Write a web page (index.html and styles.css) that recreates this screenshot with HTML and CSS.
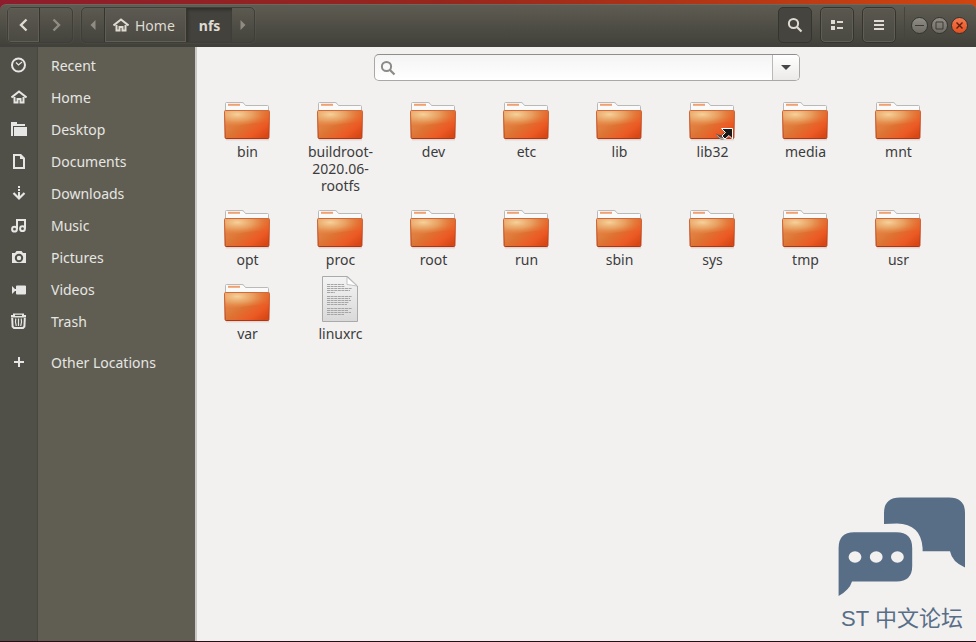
FILE: index.html
```
<!DOCTYPE html>
<html lang="en">
<head>
<meta charset="utf-8">
<title>nfs</title>
<link rel="stylesheet" href="styles.css">
</head>
<body>
<svg class="defs" width="0" height="0" aria-hidden="true">
  <defs>
    <linearGradient id="body" x1="0" y1="0" x2="1" y2=".8">
      <stop offset="0" stop-color="#e59a5e"/><stop offset=".5" stop-color="#dd7434"/><stop offset=".8" stop-color="#ec5a24"/><stop offset="1" stop-color="#d84816"/>
    </linearGradient>
    <radialGradient id="shine" cx=".28" cy=".2" r=".75">
      <stop offset="0" stop-color="#f6d29b"/><stop offset=".5" stop-color="#eba96a" stop-opacity=".75"/><stop offset="1" stop-color="#e8702f" stop-opacity=".2"/>
    </radialGradient>
    <linearGradient id="edge" x1="0" y1="0" x2="0" y2="1">
      <stop offset="0" stop-color="#cf6a3c"/><stop offset="1" stop-color="#b5320c"/>
    </linearGradient>
    <linearGradient id="paper" x1="0" y1="0" x2="0" y2="1">
      <stop offset="0" stop-color="#f4f4f4"/><stop offset="1" stop-color="#d9d9d9"/>
    </linearGradient>
    <symbol id="folder" viewBox="1 0 48 48">
      <path d="M3 46.800h43" stroke="#000" stroke-opacity=".15"/>
      <path d="M2.500 20V10.500q0-1 1-1h15.500q1 0 2 1l1.500 2h22q1 0 1 1V20z" fill="#fafafa" stroke="#b9bab8"/>
      <path d="M5 11.800h12" stroke="#f0a070" stroke-width="2"/>
      <path d="M1.500 18.500q0-1 1-1h43q1 0 1 1l-.6 26q0 1-1 1H3.100q-1 0-1-1z" fill="url(#body)"/>
      <path d="M2 18h44l-.3 11Q26 30 2.300 35z" fill="url(#shine)"/>
      <path d="M1.500 18.500q0-1 1-1h43q1 0 1 1l-.6 26q0 1-1 1H3.100q-1 0-1-1z" fill="none" stroke="url(#edge)"/>
    </symbol>
    <symbol id="file" viewBox="1 0 48 48">
      <path d="M6.500 1.500h25l10 9.500v35.500h-35z" fill="url(#paper)" stroke="#aaa"/>
      <path d="M31 2v7.500q4 .5 10 1.500z" fill="#fff" stroke="#b5b5b5" stroke-width=".8"/>
      <g stroke="#a5a5a5"><path d="M11 9.500h17M11 11.500h18M11 13.500h25M11 15.500h23M11 17.500h8M11 21.500h25M11 23.500h23M11 25.500h24M11 27.500h22M11 29.500h20M11 33.500h25M11 35.500h21M11 37.500h24M11 39.500h17" stroke-dasharray="3 .6"/></g>
    </symbol>
    <symbol id="home" viewBox="0 0 16 16">
      <path d="M.5 8.500 8 2.500l7.500 6M3.500 8v5.500h3V10h3v3.500h3V8" fill="none" stroke="currentColor" stroke-width="2"/>
    </symbol>
    <symbol id="search" viewBox="0 0 16 16">
      <path d="M10 10l4.500 4.500" stroke="currentColor" stroke-width="2.200"/><circle cx="6.500" cy="6.500" r="4.600" fill="none" stroke="currentColor" stroke-width="2"/>
    </symbol>
  </defs>
</svg>
<div class="window">
  <header class="bar">
    <nav class="group" aria-label="History">
      <button class="step step-back" aria-label="Back"><svg width="16" height="16" viewBox="0 0 16 16"><path d="M10.500 2.500 5 8l5.500 5.500" fill="none" stroke="currentColor" stroke-width="2.400"/></svg></button>
      <button class="step step-next" aria-label="Forward"><svg width="16" height="16" viewBox="0 0 16 16"><path d="M5.500 2.500 11 8l-5.500 5.500" fill="none" stroke="currentColor" stroke-width="2.400"/></svg></button>
    </nav>
    <nav class="group path" aria-label="Path">
      <button class="arrow" aria-label="Scroll left"><svg width="6" height="10" viewBox="0 0 6 10"><path d="M5.500 0v10L.5 5z" fill="currentColor"/></svg></button>
      <button class="crumb"><svg width="16" height="16"><use href="#home"/></svg>Home</button>
      <button class="crumb crumb-on">nfs</button>
      <button class="arrow" aria-label="Scroll right"><svg width="6" height="10" viewBox="0 0 6 10"><path d="M.5 0v10l5-5z" fill="currentColor"/></svg></button>
    </nav>
    <div class="tools">
      <button class="tool tool-on" aria-label="Search"><svg width="16" height="16"><use href="#search"/></svg></button>
      <button class="tool" aria-label="List view"><svg width="14" height="12" viewBox="0 0 14 12"><path d="M1 1h4v4H1zM1 7h4v4H1zM7 2h6v2H7zM7 8h6v2H7z" fill="currentColor"/></svg></button>
      <button class="tool" aria-label="Menu"><svg width="10" height="12" viewBox="0 0 10 12"><path d="M0 1h10v2H0zM0 5h10v2H0zM0 9h10v2H0z" fill="currentColor"/></svg></button>
    </div>
    <div class="controls">
      <button class="dot" aria-label="Minimize"><svg width="9" height="9" viewBox="0 0 9 9"><path d="M0 4.500h9" stroke="currentColor"/></svg></button>
      <button class="dot" aria-label="Maximize"><svg width="9" height="9" viewBox="0 0 9 9"><path d="M1 1h7v7H1z" fill="none" stroke="currentColor"/></svg></button>
      <button class="dot dot-close" aria-label="Close"><svg width="9" height="9" viewBox="0 0 9 9"><path d="M1.500 1.500l6 6M7.500 1.500l-6 6" stroke="currentColor" stroke-width="1.400"/></svg></button>
    </div>
  </header>
  <div class="main">
    <nav class="side" aria-label="Places">
      <a href="#"><svg width="16" height="16" viewBox="0 0 16 16"><circle cx="7.500" cy="8" r="6.500" fill="none" stroke="currentColor" stroke-width="2"/><path d="M5 5.500l2.500 2.500L11 5" fill="none" stroke="currentColor" stroke-width="1.200"/></svg>Recent</a>
      <a href="#"><svg width="16" height="16"><use href="#home"/></svg>Home</a>
      <a href="#"><svg width="16" height="16" viewBox="0 0 16 16"><path d="M0 1h6v2h8v2H2v10H0zM3 6h13v9H3z" fill="currentColor"/></svg>Desktop</a>
      <a href="#"><svg width="16" height="16" viewBox="0 0 16 16"><path d="M3 2h6l4 4v9H3z" fill="none" stroke="currentColor" stroke-width="2"/><path d="M9 1h1l4 4v1H9z" fill="currentColor"/></svg>Documents</a>
      <a href="#"><svg width="16" height="16" viewBox="0 0 16 16"><path d="M7 1h2v2H7zM7 4h2v2H7zM7 7h2v5H7z" fill="currentColor"/><path d="M2.500 8 8 13.500 13.500 8" fill="none" stroke="currentColor" stroke-width="2.200"/></svg>Downloads</a>
      <a href="#"><svg width="16" height="16" viewBox="0 0 16 16"><path d="M6 12V3h8v8.500" fill="none" stroke="currentColor" stroke-width="2"/><circle cx="3.500" cy="12.200" r="2.400" fill="none" stroke="currentColor" stroke-width="2"/><circle cx="11.500" cy="11.700" r="2.400" fill="none" stroke="currentColor" stroke-width="2"/></svg>Music</a>
      <a href="#"><svg width="16" height="16" viewBox="0 0 16 16"><path d="M1 4h3l1.500-2h5L12 4h3v10H1z" fill="currentColor"/><circle cx="8" cy="9" r="3.200" fill="none" stroke="#505048" stroke-width="2"/></svg>Pictures</a>
      <a href="#"><svg width="16" height="16" viewBox="0 0 16 16"><path d="M1 5l3 3h1V5.500q0-1 1-1h8q1 0 1 1v7q0 1-1 1H6q-1 0-1-1V10H4l-3 3z" fill="currentColor"/></svg>Videos</a>
      <a href="#"><svg width="16" height="16" viewBox="0 0 16 16"><path d="M0 4.500V2h2V.500h11V2h2v2.500zM4 1.800V3h7V1.800z" fill="currentColor" fill-rule="evenodd"/><path d="M1.200 5l.4 8.500L3 15h9l1.400-1.500.4-8.500" fill="none" stroke="currentColor" stroke-width="2"/><path d="M4.800 5.500q-1 4 .5 7.500M7.500 5.500V13M10.200 5.500q1 4-.5 7.500" fill="none" stroke="currentColor" stroke-width="1.200"/></svg>Trash</a>
      <a class="other" href="#"><svg width="16" height="16" viewBox="0 0 16 16"><path d="M3 7h4V3h2v4h4v2H9v4H7V9H3z" fill="currentColor"/></svg>Other Locations</a>
    </nav>
    <main class="view">
      <form class="find">
        <svg width="16" height="16" aria-hidden="true"><use href="#search"/></svg>
        <input type="text" aria-label="Search files">
        <button type="button" aria-label="Search options"><svg width="10" height="5" viewBox="0 0 10 5"><path d="M0 0h10L5 5z" fill="#454545"/></svg></button>
      </form>
      <ul class="files">
        <li><svg class="pic"><use href="#folder"/></svg>bin</li>
        <li><svg class="pic"><use href="#folder"/></svg>buildroot-2020.06-rootfs</li>
        <li><svg class="pic"><use href="#folder"/></svg>dev</li>
        <li><svg class="pic"><use href="#folder"/></svg>etc</li>
        <li><svg class="pic"><use href="#folder"/></svg>lib</li>
        <li><svg class="pic" viewBox="0 0 48 48"><use href="#folder"/><path d="M27 40.500q3 2 6 1.500 2-.5 3.500-2l-2.500 0 1.500 6q-3 1-5.500-.5-3-2-3-5z" fill="#5b4a43"/><path d="M27.500 42q3 4.500 8 3.500" fill="none" stroke="#d9c2b5"/><path d="M32.500 35.500h11v10.500l-3.500-3.500-4 3.500-3-3 3.500-3.500z" fill="#191919" stroke="#fff" stroke-width="1"/></svg>lib32</li>
        <li><svg class="pic"><use href="#folder"/></svg>media</li>
        <li><svg class="pic"><use href="#folder"/></svg>mnt</li>
        <li><svg class="pic"><use href="#folder"/></svg>opt</li>
        <li><svg class="pic"><use href="#folder"/></svg>proc</li>
        <li><svg class="pic"><use href="#folder"/></svg>root</li>
        <li><svg class="pic"><use href="#folder"/></svg>run</li>
        <li><svg class="pic"><use href="#folder"/></svg>sbin</li>
        <li><svg class="pic"><use href="#folder"/></svg>sys</li>
        <li><svg class="pic"><use href="#folder"/></svg>tmp</li>
        <li><svg class="pic"><use href="#folder"/></svg>usr</li>
        <li><svg class="pic"><use href="#folder"/></svg>var</li>
        <li><svg class="pic"><use href="#file"/></svg>linuxrc</li>
      </ul>
      <div class="mark">
        <svg width="128" height="100" viewBox="12 12 128 100" fill="currentColor" aria-hidden="true">
          <path d="M58 39V28Q58 12.500 74 12.500h49q16 0 16 15.500v54.500Q126 77 124 66.300H96.600V63Q95 39 71 38.500z"/>
          <path fill-rule="evenodd" d="M12.600 111V63Q12.600 47.300 28 47.300h42.500q15.700 0 15.700 15.700v18q0 15.500-15.700 15.500H26Q23.500 105 12.600 111zM22.600 72a6.400 5.800 0 1 0 12.800 0a6.400 5.800 0 1 0-12.800 0zM43.800 72a6.400 5.800 0 1 0 12.800 0a6.400 5.800 0 1 0-12.800 0zM65 72a6.400 5.800 0 1 0 12.800 0a6.400 5.800 0 1 0-12.800 0z"/>
        </svg>
        <span>ST 中文论坛</span>
      </div>
    </main>
  </div>
</div>
</body>
</html>
```

FILE: styles.css
```
* { box-sizing: border-box; }
body {
  margin: 0;
  font: 14px/17px "Noto Sans", "Open Sans", sans-serif;
  color: #3c3c3c;
  background: linear-gradient(90deg, #8f1c2c, #96261d 45%, #d0450f);
}
.defs { position: absolute; }
svg { flex: none; }
button { font: inherit; color: inherit; padding: 0; border: 0; background: none; display: flex; align-items: center; justify-content: center; }
.window { display: flex; flex-direction: column; min-height: 100vh; padding-top: 4px; border-bottom: 1px solid #2c0a16; }
.bar {
  display: flex;
  align-items: stretch;
  gap: 8px;
  height: 43px;
  padding: 2px 8px 4px 7px;
  color: #dfdbd2;
  background: linear-gradient(#5e5c52, #403f39);
  border-top: 1px solid #6b685e;
  border-radius: 6px 6px 0 0;
}
.group { display: flex; border: 1px solid #3f3e38; border-radius: 5px; overflow: hidden; }
.step { width: 32px; }
.step-back { border-right: 1px solid #35342f; background: linear-gradient(#5c5a51, #4a4942); box-shadow: inset 0 0 0 1px #605e54; }
.step-next, .arrow { color: #8f8c83; }
.group, .tool { box-shadow: 0 0 0 1px #ffffff08; }
.arrow { width: 22px; }
.crumb { gap: 6px; padding: 0 11px 0 8px; border-left: 1px solid #35342f; background: linear-gradient(#5c5a51, #4a4942); box-shadow: inset 0 0 0 1px #605e54; }
.crumb-on { padding: 0 12px; font-weight: bold; background: #43423c; box-shadow: inset 1px 2px 3px #302f2a; }
.tools { display: flex; gap: 8px; margin-left: auto; }
.tool { width: 34px; border: 1px solid #35342f; border-radius: 5px; background: linear-gradient(#59574e, #4a4942); box-shadow: inset 0 0 0 1px #605e54; }
.tool-on { background: #45443e; box-shadow: none; }
.controls { display: flex; align-items: center; gap: 3px; padding-left: 6px; border-left: 1px solid #45443d; }
.dot { width: 17px; height: 17px; border: 1px solid #35342f; border-radius: 50%; color: #3b3a35; background: linear-gradient(#8f8d85, #6d6b64); }
.dot-close { color: #5a1f0b; background: linear-gradient(#f57a50, #e4501f); }
.main { flex: 1; display: flex; }
.side { width: 197px; padding-top: 2px; border-right: 2px solid #cbc8c3; background: linear-gradient(90deg, #505048 37px, #484840 37px 38px, #605e52 38px); }
.side a { display: flex; align-items: center; gap: 24px; height: 32px; padding-left: 11px; color: #e6e6e4; text-decoration: none; }
.side .other { margin-top: 9px; }
.view { flex: 1; position: relative; background: #f2f1f0; }
.find { display: flex; align-items: center; width: 426px; max-width: 100%; height: 27px; margin: 7px auto 12px; border: 1px solid #aaa8a5; border-top-color: #8f8e8b; border-radius: 5px; background: linear-gradient(#f4f4f4, #fff); overflow: hidden; color: #8c8b88; }
.find svg { margin-left: 5px; }
.find input { flex: 1; height: 25px; border: 0; outline: 0; background: none; font: inherit; }
.find button { width: 27px; height: 25px; border-left: 1px solid #bbb9b6; background: linear-gradient(#fff, #ebeae8); }
.find button svg { margin: 0; }
.files { display: grid; grid-template-columns: repeat(auto-fill, 93px); row-gap: 7px; margin: 0; padding: 0 0 0 4px; list-style: none; }
.files li { display: flex; flex-direction: column; align-items: center; gap: 2px; padding: 0 11px; text-align: center; }
.pic { width: 48px; height: 48px; }
.mark { position: absolute; right: 10px; bottom: 8px; display: flex; flex-direction: column; align-items: center; gap: 7px; color: #586e87; font: 22px/29px "Liberation Sans", "Noto Sans CJK SC", sans-serif; }
.mark span { white-space: nowrap; }
```
